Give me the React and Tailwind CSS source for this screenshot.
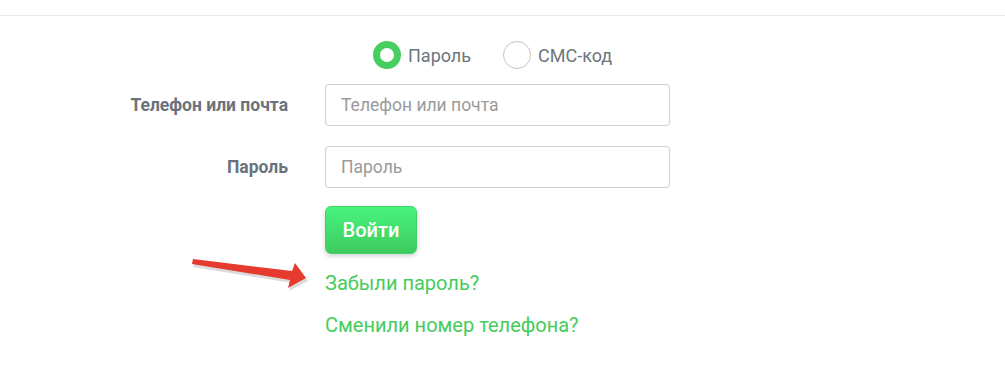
import React, { useState } from "react";

const font = { fontFamily: "Roboto, 'Liberation Sans', sans-serif" };

const Radio = ({ checked, label, onClick }) => (
  <button type="button" onClick={onClick} className="flex items-center gap-[7px]">
    {checked ? (
      <span className="w-[28px] h-[28px] rounded-full border-[7px] border-[#46cf5e] bg-white"></span>
    ) : (
      <span className="w-[28px] h-[28px] rounded-full border border-[#c4c4c4] bg-white"></span>
    )}
    <span className="text-[18px] text-[#6c7680]">{label}</span>
  </button>
);

const Field = ({ label, placeholder, type = "text" }) => (
  <div className="flex items-center">
    <label className="w-[288px] text-right text-[17.5px] font-bold text-[#6a737d]">{label}</label>
    <input
      type={type}
      placeholder={placeholder}
      className="ml-[37px] w-[345px] h-[42px] px-[15px] rounded-[4px] border border-[#cfcfcf] text-[17.5px] text-[#444] placeholder:text-[#9a9a9a] outline-none"
    />
  </div>
);

export default function App() {
  const [mode, setMode] = useState("password");

  return (
    <div className="relative w-[1005px] h-[365px] bg-white overflow-hidden" style={font}>
      <div className="h-[16px] border-b border-[#e8e8e8]"></div>

      <div className="pt-[25px]">
        {/* Login mode */}
        <div className="flex items-center gap-[32px] pl-[373px]">
          <Radio checked={mode === "password"} label="Пароль" onClick={() => setMode("password")} />
          <Radio checked={mode === "sms"} label="СМС-код" onClick={() => setMode("sms")} />
        </div>

        <div className="mt-[15px] flex flex-col gap-[20px]">
          <Field label="Телефон или почта" placeholder="Телефон или почта" />
          <Field label="Пароль" placeholder="Пароль" type="password" />
        </div>

        <div className="pl-[325px] mt-[18px] flex flex-col items-start">
          <button className="w-[92px] h-[48px] rounded-[6px] border border-[#3ed466] bg-gradient-to-b from-[#48f47e] to-[#3fca5e] text-white text-[20px] font-medium shadow-[0_2px_5px_rgba(0,0,0,0.18)]">
            Войти
          </button>
          <a href="#" className="mt-[17px] text-[20px] text-[#45cc5b] leading-[24px]">
            Забыли пароль?
          </a>
          <a href="#" className="mt-[18px] text-[20px] text-[#45cc5b] leading-[24px]">
            Сменили номер телефона?
          </a>
        </div>
      </div>

      {/* Annotation arrow */}
      <svg className="absolute left-[188px] top-[254px]" width="125" height="40" viewBox="188 254 125 40">
        <polygon
          points="193,260 292,272 295,264 307,279 288,289 291,281 192,265"
          fill="#b8b8b8"
          opacity="0.5"
          transform="translate(1,2)"
        />
        <polygon points="193,259 292,271 295,263 306,278 288,288 290,280 192,264" fill="#e53b2f" />
      </svg>
    </div>
  );
}
